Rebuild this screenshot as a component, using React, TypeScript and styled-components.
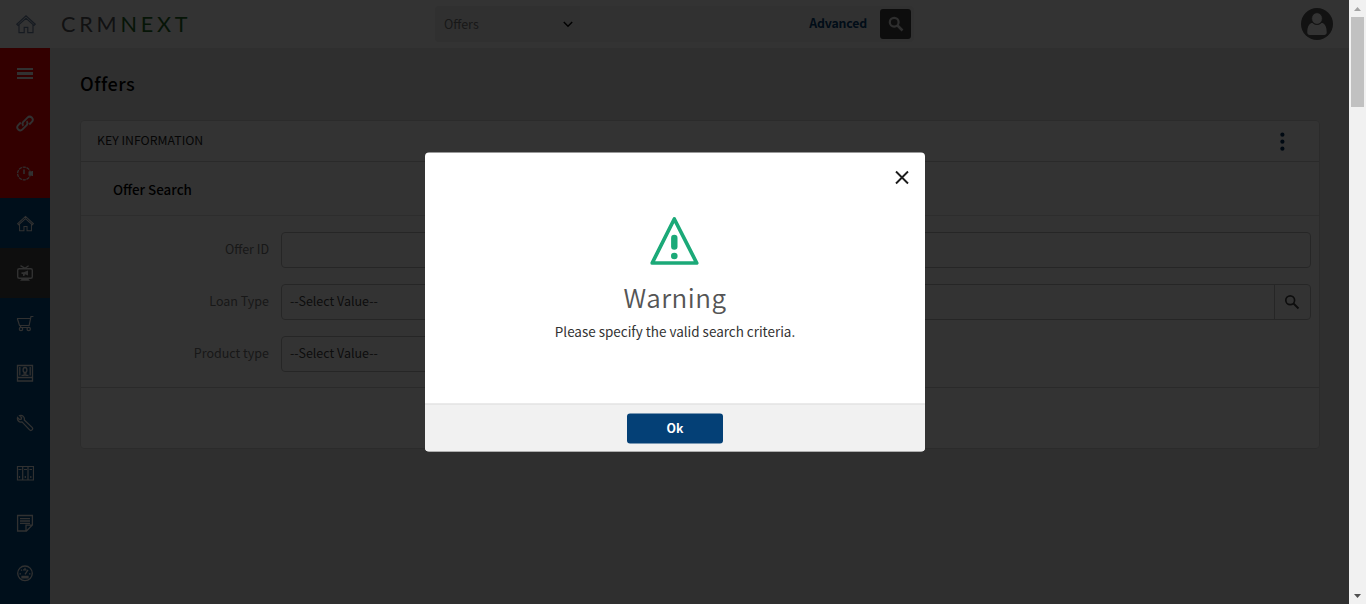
import React from "react";
import styled, { createGlobalStyle } from "styled-components";

const Global = createGlobalStyle`
  * { box-sizing: border-box; }
  html, body { margin: 0; overflow: hidden; }
  body, button { font-family: "Noto Sans CJK SC", "Noto Sans", sans-serif; font-size: 12.5px; }
  svg { display: block; }
`;

const Screen = styled.div`
  position: relative;
  display: flex;
  width: 1366px;
  height: 604px;
`;
const Page = styled.div`
  display: flex;
  flex-direction: column;
  width: 1349px;
  background: #ebebeb;
`;
const TopBar = styled.header`
  display: flex;
  align-items: center;
  height: 48px;
  padding: 0 16px;
  background: #fff;
`;
const Logo = styled.div`
  width: 374px;
  margin-left: 25px;
  font: 400 21.6px/32px Lato, sans-serif;
  letter-spacing: 3.8px;
  color: #55585c;
`;
const LogoAccent = styled.span`
  color: #1f6a26;
`;
const SearchBar = styled.div`
  display: flex;
  align-items: center;
  width: 479px;
  height: 36px;
  margin-right: auto;
  padding-right: 3px;
  border-radius: 4px;
  background: #f4f4f4;
`;
const Scope = styled.div`
  display: flex;
  align-items: center;
  justify-content: space-between;
  width: 145px;
  height: 36px;
  padding: 0 7px 0 9px;
  border-radius: 4px 0 0 4px;
  background: #f0f0f0;
  color: #777;
`;
const ScopeText = styled.span`
  padding-bottom: 2px;
`;
const Advanced = styled.a`
  margin: 0 13px 0 auto;
  padding-bottom: 2px;
  color: #044076;
  font-size: 12.3px;
  font-weight: 700;
  letter-spacing: -0.15px;
`;
const SearchButton = styled.button`
  display: grid;
  place-items: center;
  width: 31px;
  height: 30px;
  padding: 0;
  border: 0;
  border-radius: 3px;
  background: #444;
  color: #e4e4e4;
`;
const Main = styled.div`
  display: flex;
  flex: 1;
  min-height: 0;
`;
const Rail = styled.nav`
  width: 50px;
  overflow: hidden;
  background: #004b87;
`;
const railTones = { red: "#ff0000", blue: "#004b87", active: "#484848" };
const RailItem = styled.div<{ $tone: keyof typeof railTones }>`
  display: grid;
  place-items: center;
  height: 50px;
  background: ${(p) => railTones[p.$tone]};
  color: #f2f2f2;
`;
const Content = styled.main`
  flex: 1;
  padding: 20px 29px 0 30px;
`;
const Title = styled.h1`
  margin: 0;
  height: 52px;
  font-size: 18.2px;
  font-weight: 500;
  line-height: 31px;
  letter-spacing: 0.45px;
  color: #000;
`;
const Panel = styled.section`
  border: 1px solid #d8d8d8;
  border-radius: 4px;
  background: #fff;
`;
const PanelHead = styled.div`
  display: flex;
  align-items: center;
  justify-content: space-between;
  height: 41px;
  padding: 0 34px 0 16px;
  border-bottom: 1px solid #d0d0d0;
  font-size: 12.3px;
  color: #222;
`;
const PanelName = styled.span`
  padding-bottom: 3px;
`;
const SectionHead = styled.div`
  height: 54px;
  padding-left: 32px;
  border-bottom: 1px solid #e2e2e2;
  font-size: 13.4px;
  font-weight: 500;
  line-height: 54px;
  color: #000;
`;
const Form = styled.div`
  display: grid;
  gap: 16px;
  padding: 16px 8px 15px 0;
  border-bottom: 1px solid #d0d0d0;
`;
const Field = styled.div`
  display: grid;
  grid-template-columns: 188px 1fr;
  column-gap: 12px;
  line-height: 34px;
`;
const Label = styled.label`
  text-align: right;
  color: #777;
`;
const Control = styled.div<{ $width?: string }>`
  display: flex;
  justify-content: space-between;
  width: ${(p) => p.$width ?? "100%"};
  height: 36px;
  padding-left: 8px;
  border: 1px solid #bdbdbd;
  border-radius: 4px;
  line-height: 32px;
  color: #444;
`;
const Lookup = styled.span`
  display: grid;
  place-items: center;
  width: 36px;
  padding-right: 1px;
  border-left: 1px solid #bdbdbd;
`;
const PanelFoot = styled.div`
  height: 60px;
`;
const Scrollbar = styled.div`
  display: flex;
  flex-direction: column;
  align-items: center;
  width: 17px;
  background: #f1f1f1;
`;
const Arrow = styled.div`
  display: grid;
  place-items: center;
  height: 17px;
`;
const Thumb = styled.div`
  width: 13px;
  height: 90px;
  margin-bottom: auto;
  background: #c1c1c1;
`;
const Backdrop = styled.div`
  position: absolute;
  inset: 0 17px 0 0;
  padding: 152px 0 0 425px;
  background: rgba(0, 0, 0, 0.8);
`;
const Dialog = styled.div`
  display: flex;
  flex-direction: column;
  width: 500px;
  height: 299px;
  overflow: hidden;
  border-radius: 4px;
  background: #fff;
  transform: translateY(0.5px);
`;
const DialogClose = styled.div`
  display: flex;
  justify-content: flex-end;
  padding: 18px 16px 0 0;
`;
const DialogBody = styled.div`
  display: flex;
  flex: 1;
  flex-direction: column;
  align-items: center;
  padding-top: 32px;
`;
const DialogTitle = styled.h2`
  margin: 11px 0 0;
  font-size: 26px;
  font-weight: 350;
  line-height: 38px;
  letter-spacing: 0.5px;
  color: #555;
`;
const Message = styled.p`
  margin: 5px 0 0;
  font-size: 13.46px;
  line-height: 20px;
  color: #333;
`;
const DialogFoot = styled.div`
  display: flex;
  justify-content: center;
  height: 48px;
  padding-top: 9px;
  border-top: 1px solid #dcdcdc;
  background: #f1f1f1;
`;
const OkButton = styled.button`
  width: 96px;
  height: 30px;
  padding: 0 0 3px;
  border: 0;
  border-radius: 3px;
  background: #044076;
  color: #fff;
  font-size: 12.3px;
  font-weight: 700;
`;

const HouseIcon = ({ size = 16, color = "currentColor" }: { size?: number; color?: string }) => (
  <svg width={size} height={size} viewBox="0 0 20 20" fill="none" stroke={color} strokeWidth="1.2">
    <path d="M.8 10.2 10 1.7l9.2 8.5-1.2 1.2L10 4.2l-8 7.2zM3 10.6v8h5.2v-5.2h3.6v5.2H17v-8" />
  </svg>
);
const SearchIcon = ({ width = 2.2 }: { width?: number }) => (
  <svg width="16" height="16" viewBox="0 0 16 16" fill="none" stroke="currentColor" strokeWidth={width}>
    <circle cx="6.2" cy="6.2" r="4.4" />
    <path d="m9.5 9.5 5 5" strokeWidth={width + 0.3} />
  </svg>
);
const Glyph = ({ children, width = 1 }: { children: React.ReactNode; width?: number }) => (
  <svg width="18" height="18" viewBox="0 0 18 18" fill="none" stroke="currentColor" strokeWidth={width}>
    {children}
  </svg>
);

const railItems: { tone: keyof typeof railTones; icon: React.ReactNode }[] = [
  { tone: "red", icon: <Glyph><path d="M1 4h16v2H1zM1 8h16v3H1zM1 13h16v2H1z" fill="currentColor" stroke="none" /></Glyph> },
  {
    tone: "red",
    icon: (
      <Glyph width={1.9}>
        <path d="M7.400 11.800a2.800 2.800 0 0 1 .2-4.200l3.900-4a3 3 0 0 1 4.300 4.200L13.200 10.500M10.600 7.200a2.800 2.800 0 0 1-.2 4.200l-3.900 4a3 3 0 0 1-4.300-4.200L4.800 8.500" />
      </Glyph>
    ),
  },
  {
    tone: "red",
    icon: (
      <Glyph width={1.2}>
        <circle cx="8" cy="9.500" r="6.400" strokeDasharray="3.200 .8" />
        <path d="M8 5.500V10" strokeWidth="1.500" />
        <path d="M12.500 7.500h3V7H17v5h-1.500v-.500h-3z" fill="currentColor" stroke="none" />
      </Glyph>
    ),
  },
  { tone: "blue", icon: <HouseIcon size={17} /> },
  {
    tone: "active",
    icon: (
      <Glyph width={1.4}>
        <rect x="1.700" y="4.700" width="14.600" height="9.600" rx="1.500" />
        <path d="m4.500 1.600 4.500 2.600 3.600-2.400" strokeWidth="1.300" />
        <path d="M6 14.500h6l2 2.200H4zM5.500 8.200h2.200L12 6.500v5L9 10.200l-.6 1.800H7V10H5.500z" fill="currentColor" stroke="none" />
      </Glyph>
    ),
  },
  {
    tone: "blue",
    icon: (
      <Glyph width={1.2}>
        <path d="M1 4.500h13.200M1.300 4.500 3.500 11.500h9.600L15 2.500h2.400M4 11.500l1 2h8" />
        <circle cx="5" cy="15" r="1.700" />
        <circle cx="12.700" cy="15" r="1.700" />
      </Glyph>
    ),
  },
  {
    tone: "blue",
    icon: (
      <Glyph width={1.3}>
        <path d="M1.500 1.500h15v15.500h-15zM1.500 13.500h15M3.800 3v8.500M14.200 11.500V3M5.500 11.300h2.700V8.500M12.500 11.300H9.800V8.500" />
        <ellipse cx="9" cy="6" rx="1.900" ry="2.500" />
      </Glyph>
    ),
  },
  {
    tone: "blue",
    icon: (
      <Glyph width={1.3}>
        <path d="M3.600 1.600 5.600 3.700 5.200 5.200 3.700 5.600 1.600 3.500C.9 6.200 3 8.700 6 7.900l7.600 8c1.600 1.600 4.200-.8 2.500-2.500L8.300 6C9 3 6.400.8 3.600 1.600z" />
      </Glyph>
    ),
  },
  {
    tone: "blue",
    icon: (
      <Glyph width={1.200}>
        <path d="M1.500 2.500h16v13.500h-16zM6.700 2.500v13M12 2.500v13M2.500 5.500h3M8 5.500h3M13.500 5.500h3M3.500 12v2M9.300 12v2M14.800 12v2" />
      </Glyph>
    ),
  },
  {
    tone: "blue",
    icon: (
      <Glyph width={1.300}>
        <path d="M1.600 1.500h14.800v9.500l-6 6H1.600zM10 17v-5.800h6.400M4 4.700h10M4 7h10M4 9.300h10" />
      </Glyph>
    ),
  },
  {
    tone: "blue",
    icon: (
      <Glyph width={1.300}>
        <circle cx="9" cy="9.300" r="7.300" />
        <path d="M3.500 9.800H5M13 9.800h1.500M5 5.600l1 1M9 3.800v1.500M9 10.300l3-4.500M7 5.800h3.500" />
        <path d="M6 12.500h6v1.300H6z" fill="currentColor" />
      </Glyph>
    ),
  },
];

export default function App() {
  return (
    <Screen>
      <Global />
      <Page>
        <TopBar>
          <HouseIcon size={20} color="#7085a5" />
          <Logo>CRM<LogoAccent>NEXT</LogoAccent></Logo>
          <SearchBar>
            <Scope>
              <ScopeText>Offers</ScopeText>
              <svg width="10" height="8" viewBox="0 0 10 8" fill="none" stroke="#000" strokeWidth="1.5">
                <path d="m.8 2 4.200 4.200L9.200 2" />
              </svg>
            </Scope>
            <Advanced>Advanced</Advanced>
            <SearchButton><SearchIcon /></SearchButton>
          </SearchBar>
          <svg width="32" height="32" viewBox="0 0 32 32">
            <circle cx="16" cy="16" r="16" fill="#5a5a5a" />
            <path d="M6.300 24.500c0-7 2.500-9.500 5.200-9.500 1.200 1.300 2.700 1.900 4.500 1.900s3.300-.6 4.500-1.900c2.700 0 5.200 2.500 5.200 9.500 0 1.600-1 2.500-2.500 2.500H8.800c-1.500 0-2.500-.9-2.500-2.500z" fill="#fff" />
            <ellipse cx="16" cy="10.500" rx="5.300" ry="5.800" fill="#fff" stroke="#5a5a5a" strokeWidth=".7" />
          </svg>
        </TopBar>
        <Main>
          <Rail>
            {railItems.map((item, i) => (
              <RailItem key={i} $tone={item.tone}>{item.icon}</RailItem>
            ))}
          </Rail>
          <Content>
            <Title>Offers</Title>
            <Panel>
              <PanelHead>
                <PanelName>KEY INFORMATION</PanelName>
                <svg width="6" height="20" viewBox="0 0 6 20" fill="#04305a">
                  <circle cx="3.400" cy="3.700" r="2.100" />
                  <circle cx="3.400" cy="10.700" r="2.100" />
                  <circle cx="3.400" cy="17.700" r="2.100" />
                </svg>
              </PanelHead>
              <SectionHead>Offer Search</SectionHead>
              <Form>
                <Field>
                  <Label>Offer ID</Label>
                  <Control />
                </Field>
                <Field>
                  <Label>Loan Type</Label>
                  <Control>
                    --Select Value--
                    <Lookup><SearchIcon width={1.700} /></Lookup>
                  </Control>
                </Field>
                <Field>
                  <Label>Product type</Label>
                  <Control $width="412px">--Select Value--</Control>
                </Field>
              </Form>
              <PanelFoot />
            </Panel>
          </Content>
        </Main>
      </Page>
      <Scrollbar>
        <Arrow>
          <svg width="7" height="4" viewBox="0 0 7 4" fill="#a3a3a3"><path d="M0 4 3.500 0 7 4z" /></svg>
        </Arrow>
        <Thumb />
        <Arrow>
          <svg width="7" height="4" viewBox="0 0 7 4" fill="#505050"><path d="M0 0h7L3.500 4z" /></svg>
        </Arrow>
      </Scrollbar>
      <Backdrop>
        <Dialog>
          <DialogClose>
            <svg width="14" height="14" viewBox="0 0 14 14" fill="none" stroke="#1c1c1c" strokeWidth="1.900">
              <path d="m1 1 12 12M13 1 1 13" />
            </svg>
          </DialogClose>
          <DialogBody>
            <svg width="50" height="50" viewBox="0 0 50 50" fill="none" stroke="#1ba978">
              <path d="M24.300 2.500 46.700 46.500H2.200z" strokeWidth="3.700" strokeLinejoin="round" />
              <path d="M24.300 21.500v8.500" strokeWidth="6.400" strokeLinecap="round" />
              <circle cx="24.300" cy="39.500" r="3.300" fill="#1ba978" stroke="none" />
            </svg>
            <DialogTitle>Warning</DialogTitle>
            <Message>Please specify the valid search criteria.</Message>
          </DialogBody>
          <DialogFoot>
            <OkButton>Ok</OkButton>
          </DialogFoot>
        </Dialog>
      </Backdrop>
    </Screen>
  );
}
